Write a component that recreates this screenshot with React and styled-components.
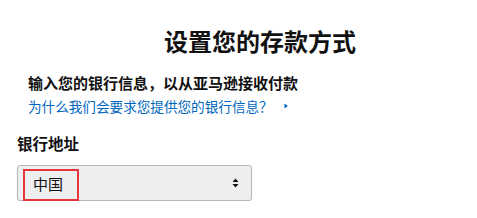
import React from 'react'
import styled, { createGlobalStyle } from 'styled-components'

const GlobalStyle = createGlobalStyle`
  html, body {
    margin: 0;
    padding: 0;
    background: #fff;
  }
  body {
    font-family: "Noto Sans CJK SC", "Noto Sans", Arial, sans-serif;
    color: #111;
  }
`

const Page = styled.div`
  padding: 26px 0 0 17px;
`

const Title = styled.h1`
  margin: 0;
  padding-left: 26px;
  font-size: 24px;
  line-height: 30px;
  font-weight: 700;
  text-align: center;
`

const Intro = styled.div`
  margin: 17px 0 0 11px;
  display: flex;
  flex-direction: column;
  gap: 4px;
`

const Subtitle = styled.div`
  font-size: 15px;
  line-height: 20px;
  font-weight: 700;
`

const HelpLink = styled.a`
  display: flex;
  align-items: center;
  gap: 11px;
  font-size: 13.6px;
  line-height: 18px;
  color: #0066c0;
  text-decoration: none;
`

const Field = styled.div`
  margin-top: 18px;
  display: flex;
  flex-direction: column;
  gap: 12px;
`

const Label = styled.label`
  font-size: 15.5px;
  line-height: 20px;
  font-weight: 700;
`

const Select = styled.div`
  position: relative;
  box-sizing: border-box;
  width: 235px;
  height: 36px;
  display: flex;
  align-items: center;
  justify-content: space-between;
  padding: 0 12px 0 15px;
  background: #edeeef;
  border: 1px solid #b3b6bb;
  border-radius: 3px;
  box-shadow: 0 1px 1px rgba(0, 0, 0, 0.12);
  font-size: 15px;
  color: #111;
`

const Highlight = styled.span`
  position: absolute;
  left: 5px;
  top: 3px;
  width: 56px;
  height: 32px;
  box-sizing: border-box;
  border: 2px solid #e8353b;
`

const Caret = () => (
  <svg width="4" height="6" viewBox="0 0 4 6">
    <path d="M0.5 0.5 L3.8 3 L0.5 5.5 Z" fill="#0066c0" />
  </svg>
)

const Arrows = () => (
  <svg width="7" height="10" viewBox="0 0 7 10">
    <path d="M0.5 4 L3.5 0.5 L6.5 4 Z M0.5 6 L3.5 9.5 L6.5 6 Z" fill="#111" />
  </svg>
)

const App = () => {
  return (
    <>
      <GlobalStyle />
      <Page>
        <Title>设置您的存款方式</Title>
        <Intro>
          <Subtitle>输入您的银行信息，以从亚马逊接收付款</Subtitle>
          <HelpLink href="#">
            为什么我们会要求您提供您的银行信息？
            <Caret />
          </HelpLink>
        </Intro>
        <Field>
          <Label>银行地址</Label>
          <Select>
            <span>中国</span>
            <Arrows />
            <Highlight />
          </Select>
        </Field>
      </Page>
    </>
  )
}

export default App
